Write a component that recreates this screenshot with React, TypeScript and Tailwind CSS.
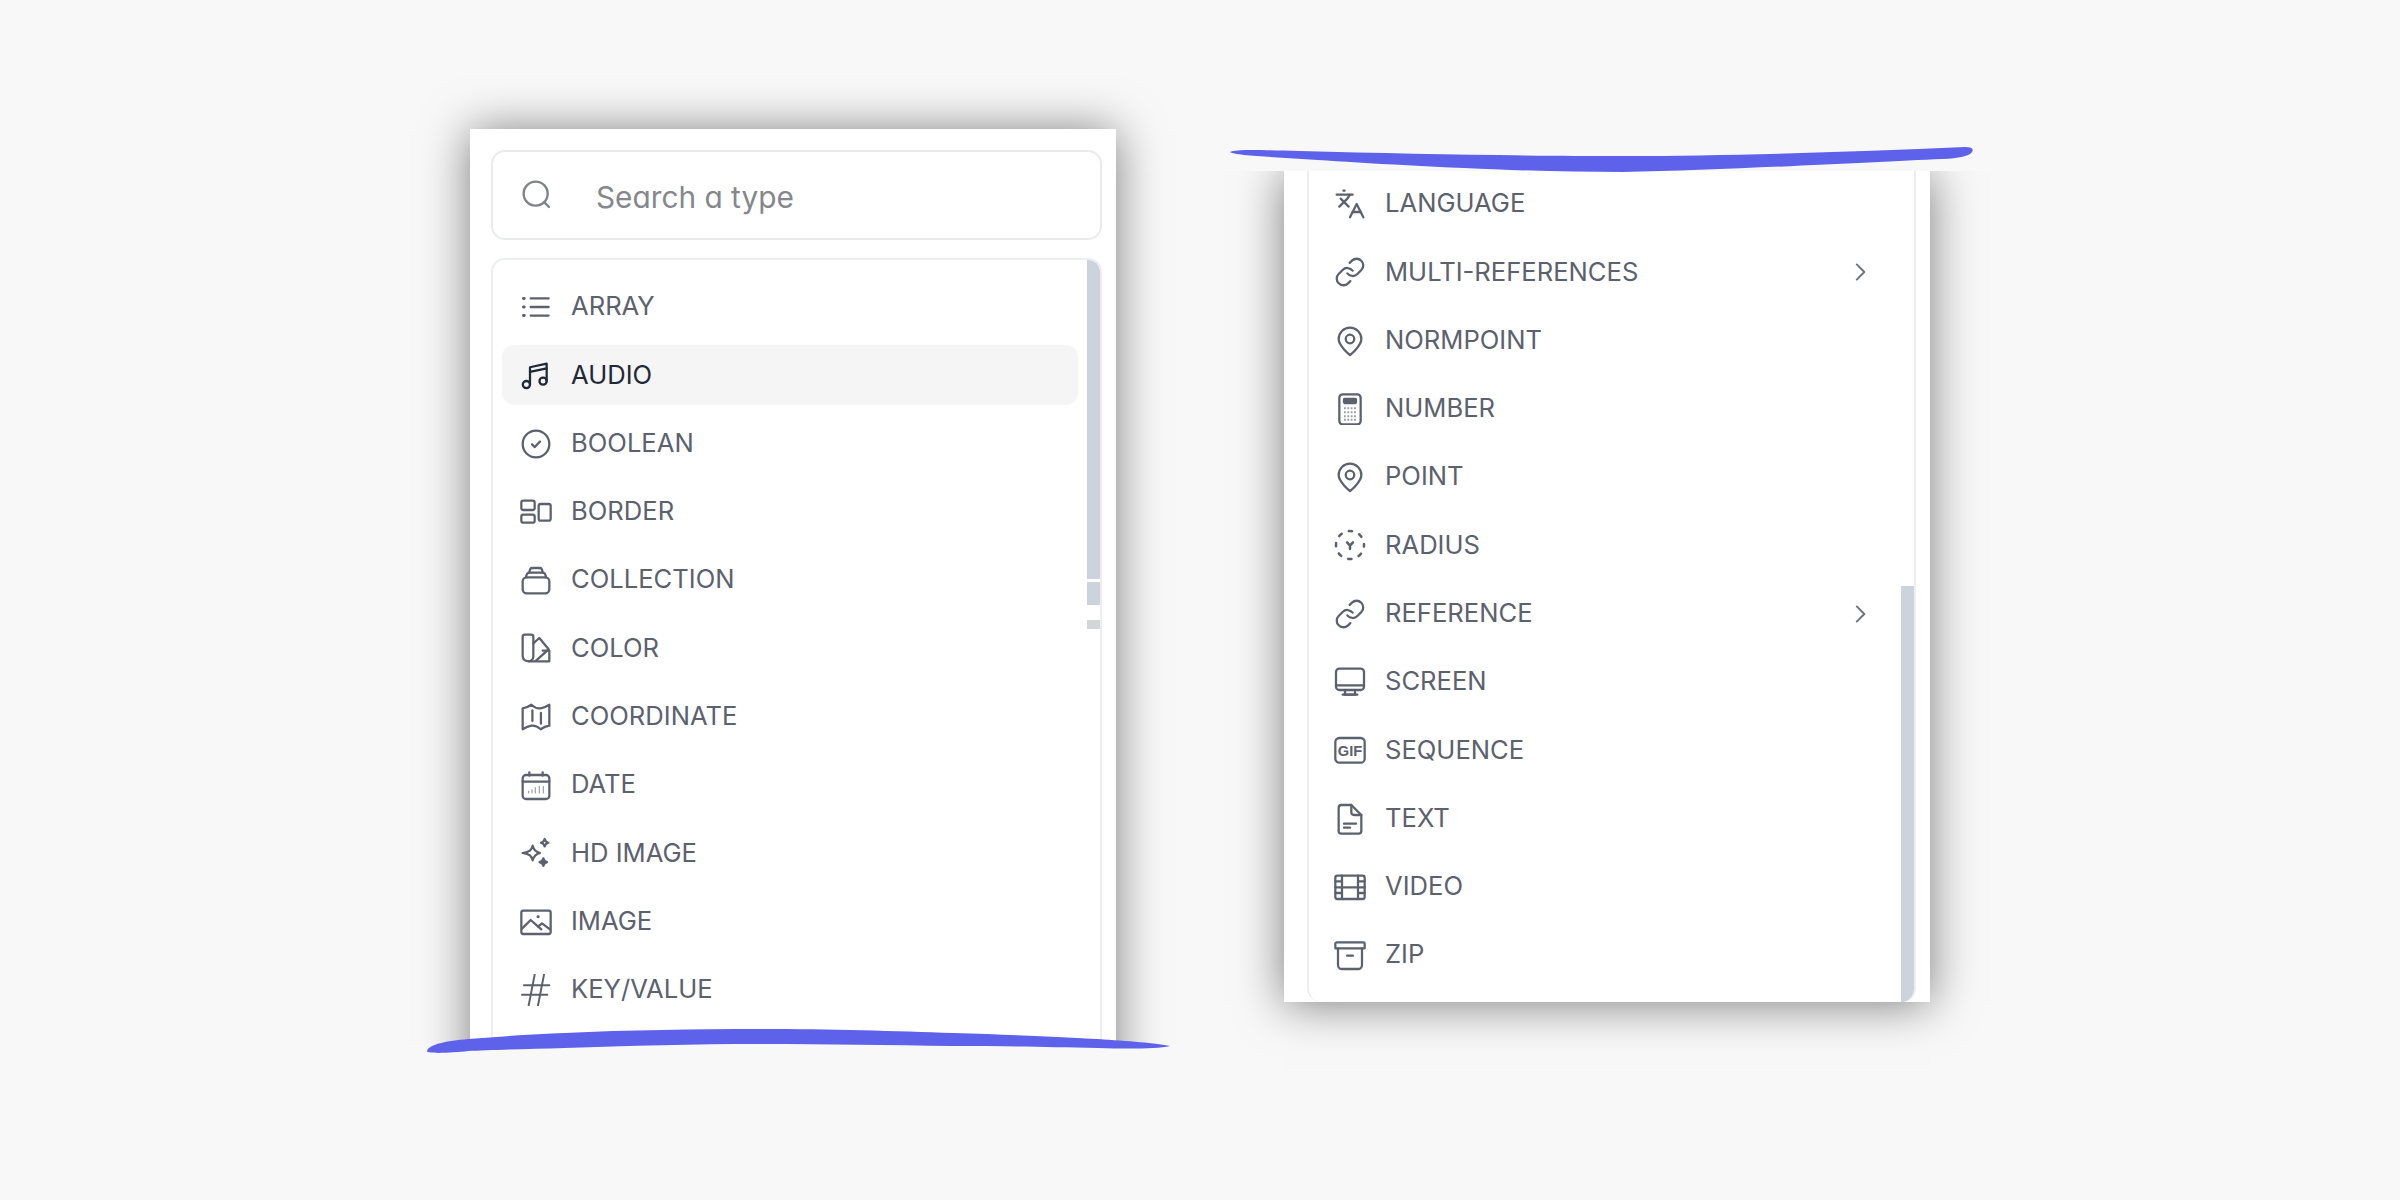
import type { ReactNode } from 'react';

const svgProps = {
  viewBox: '0 0 24 24',
  fill: 'none',
  stroke: 'currentColor',
  strokeWidth: 1.7,
  strokeLinecap: 'round' as const,
  strokeLinejoin: 'round' as const,
  className: 'w-[32px] h-[32px] shrink-0',
};

const Link = (
  <svg {...svgProps}>
    <path d="M10 13a5 5 0 0 0 7.540.540l3-3a5 5 0 0 0-7.070-7.070l-1.720 1.710" />
    <path d="M14 11a5 5 0 0 0-7.540-.540l-3 3a5 5 0 0 0 7.070 7.070l1.710-1.710" />
  </svg>
);

const Pin = (
  <svg {...svgProps}>
    <path d="M12 22.500S3.500 15.800 3.500 10.500a8.500 8.500 0 0 1 17 0c0 5.300-8.500 12-8.500 12Z" />
    <circle cx="12" cy="10.500" r="3.200" />
  </svg>
);

const icons: Record<string, ReactNode> = {
  array: (
    <svg {...svgProps}>
      <path d="M8 5.600h13.500M8 12h13.500M8 18.400h13.500" />
      <path d="M2.600 5.600h.6M2.600 12h.6M2.600 18.400h.6" strokeWidth={2.200} />
    </svg>
  ),
  audio: (
    <svg {...svgProps}>
      <path d="M7.500 19V6.200L20 3.500V16.500" />
      <path d="M7.500 9.600 20 7" />
      <circle cx="4.800" cy="19.200" r="2.700" />
      <circle cx="17.300" cy="16.600" r="2.700" />
    </svg>
  ),
  boolean: (
    <svg {...svgProps}>
      <circle cx="12" cy="12" r="10" />
      <path d="m9 12.300 2.100 2 3.900-4.200" />
    </svg>
  ),
  border: (
    <svg {...svgProps}>
      <rect x="1" y="3.500" width="10" height="7" rx="1.500" />
      <rect x="1" y="14" width="10" height="6" rx="1.500" />
      <rect x="14" y="6" width="9" height="12.500" rx="1.500" />
    </svg>
  ),
  collection: (
    <svg {...svgProps}>
      <rect x="2" y="10" width="20" height="12" rx="3" />
      <path d="M4.500 10c.3-2.500 1.200-3.500 2.500-3.500h10c1.300 0 2.200 1 2.500 3.500" />
      <path d="M7 6.500C7.300 4 8 3 9 3h6c1 0 1.700 1 2 3.500" />
    </svg>
  ),
  color: (
    <svg {...svgProps}>
      <path d="M2 3.500A1.500 1.500 0 0 1 3.500 2h5A1.500 1.500 0 0 1 10 3.500V18.500a3.500 3.500 0 0 1-4 3.400A3.800 3.800 0 0 1 2 18Z" />
      <path d="m10 8.500 4.500-4 7 8.500-9.500 8.500" />
      <path d="M7 22h15v-8h-5" />
    </svg>
  ),
  coordinate: (
    <svg {...svgProps}>
      <path d="M2 5.500Q5.500 5 8.500 2.800 12 6 15.500 5.500 18.500 5 22 2.800V18.500Q18.500 19 15.500 21.200 12 18 8.500 18.500 5.500 19 2 21.200Z" />
      <path d="M9.300 7v8M15.700 9v8" />
    </svg>
  ),
  date: (
    <svg {...svgProps}>
      <rect x="2" y="4.500" width="20" height="18" rx="2.500" />
      <path d="M2 9.500h20M7 2.500v2.500M17 2.500v2.500" />
      <path d="M6.500 18v-1.500M9 18v-2.500M11.500 18v-4M14.500 18v-5M17.500 18v-5" strokeWidth={0.9} opacity={0.6} />
    </svg>
  ),
  hd: (
    <svg {...svgProps}>
      <path d="M9.500 6.500c.8 3.300 2.200 4.700 5.500 5.500-3.300.8-4.700 2.200-5.500 5.500C8.700 14.200 7.300 12.800 2 12c5.300-.8 6.700-2.200 7.500-5.500Z" />
      <path d="M18.500 1.500c.4 1.700 1.100 2.400 2.800 2.800-1.700.4-2.400 1.100-2.800 2.800-.4-1.700-1.100-2.400-2.800-2.800 1.700-.4 2.400-1.100 2.800-2.800Z" />
      <path d="M17.500 16c.4 1.700 1.100 2.400 2.800 2.800-1.700.4-2.400 1.100-2.800 2.800-.4-1.700-1.100-2.400-2.800-2.800 1.700-.4 2.400-1.100 2.800-2.800Z" fill="currentColor" />
    </svg>
  ),
  image: (
    <svg {...svgProps}>
      <rect x="1" y="3.500" width="22" height="17.500" rx="1.500" />
      <path d="m1.500 17 6.500-6.500 8 7" />
      <path d="m13.500 15.500 3-2.500 6 4.500" />
      <path d="M13.500 8h.2" strokeWidth={2.200} />
    </svg>
  ),
  key: (
    <svg {...svgProps} strokeWidth={1.500}>
      <path d="M3 8.500h19M1.500 15.500h19M11 .5 6.500 23.500M18 .5 13.500 23.500" />
    </svg>
  ),
  language: (
    <svg {...svgProps}>
      <path d="m5 8 6 6" />
      <path d="m4 14 6-6 2-3" />
      <path d="M2 5h12" />
      <path d="M7 2h1" />
      <path d="m22 22-5-10-5 10" />
      <path d="M14 18h6" />
    </svg>
  ),
  link: Link,
  pin: Pin,
  number: (
    <svg {...svgProps}>
      <rect x="4" y="1" width="16" height="22.500" rx="2.500" />
      <rect x="7.500" y="4.500" width="9" height="3" rx="0.500" fill="currentColor" />
      <path d="M7.500 11.500h9M7.500 14.500h9M7.500 17.500h9M7.500 20h9" strokeWidth={1.500} strokeDasharray="1.400 1.100" opacity={0.6} strokeLinecap="butt" />
    </svg>
  ),
  radius: (
    <svg {...svgProps} strokeWidth={1.900}>
      <circle cx="12" cy="12" r="10.500" strokeDasharray="2.500 5.750" strokeDashoffset="1.250" />
      <path d="m9.800 10 2.200 2.500L14.200 10M12 12.500V15" />
    </svg>
  ),
  screen: (
    <svg {...svgProps}>
      <rect x="1.500" y="2" width="21" height="16" rx="2.500" />
      <path d="M1.500 14.500h21" />
      <path d="M8.500 18 8 21.500h8L15.500 18" />
      <path d="M6.500 21.500h11" />
    </svg>
  ),
  gif: (
    <svg {...svgProps}>
      <rect x="1" y="3" width="22" height="18.500" rx="3" />
      <text x="12" y="16.200" textAnchor="middle" fontFamily="'Liberation Sans', sans-serif" fontWeight="700" fontSize="11" fill="currentColor" stroke="none">GIF</text>
    </svg>
  ),
  text: (
    <svg {...svgProps}>
      <path d="M3.500 3.500A2 2 0 0 1 5.500 1.500H13L20.500 9V21a2 2 0 0 1-2 2h-13a2 2 0 0 1-2-2Z" />
      <path d="M13 1.500V7a2 2 0 0 0 2 2h5.500" />
      <path d="M7.500 15.500h9M7.500 18.500h4.500" />
    </svg>
  ),
  video: (
    <svg {...svgProps}>
      <rect x="1" y="3.500" width="22" height="17.500" rx="1.500" />
      <path d="M6 3.500V21M18 3.500V21M1 12.200h22M1 7.800h5M1 16.500h5M18 7.800h5M18 16.500h5" />
    </svg>
  ),
  zip: (
    <svg {...svgProps}>
      <path d="M1 3.500a1 1 0 0 1 1-1h20a1 1 0 0 1 1 1V7H1Z" />
      <path d="M3 7v12.500a3 3 0 0 0 3 3h12a3 3 0 0 0 3-3V7" />
      <path d="M9.800 12.500h4.400" />
    </svg>
  ),
};

function Row({ icon, label, active, more }: { icon: string; label: string; active?: boolean; more?: boolean }) {
  return (
    <div
      className={`flex items-center gap-[19px] h-[60px] pl-[18px] pr-[19px] rounded-[12px] text-[25.6px] leading-none ${
        active ? 'bg-[#f5f5f5] text-[#1f2937]' : 'text-[#5b616d]'
      }`}
    >
      {icons[icon]}
      <span className="flex-1 pb-[2px]">{label}</span>
      {more && (
        <svg viewBox="0 0 24 24" fill="none" stroke="#6b7280" strokeWidth={1.800} strokeLinecap="round" strokeLinejoin="round" className="w-[26px] h-[26px]">
          <path d="m9 5 7 7-7 7" />
        </svg>
      )}
    </div>
  );
}

const LEFT = [
  { icon: 'array', label: 'ARRAY' },
  { icon: 'audio', label: 'AUDIO', active: true },
  { icon: 'boolean', label: 'BOOLEAN' },
  { icon: 'border', label: 'BORDER' },
  { icon: 'collection', label: 'COLLECTION' },
  { icon: 'color', label: 'COLOR' },
  { icon: 'coordinate', label: 'COORDINATE' },
  { icon: 'date', label: 'DATE' },
  { icon: 'hd', label: 'HD IMAGE' },
  { icon: 'image', label: 'IMAGE' },
  { icon: 'key', label: 'KEY/VALUE' },
];

const RIGHT = [
  { icon: 'language', label: 'LANGUAGE' },
  { icon: 'link', label: 'MULTI-REFERENCES', more: true },
  { icon: 'pin', label: 'NORMPOINT' },
  { icon: 'number', label: 'NUMBER' },
  { icon: 'pin', label: 'POINT' },
  { icon: 'radius', label: 'RADIUS' },
  { icon: 'link', label: 'REFERENCE', more: true },
  { icon: 'screen', label: 'SCREEN' },
  { icon: 'gif', label: 'SEQUENCE' },
  { icon: 'text', label: 'TEXT' },
  { icon: 'video', label: 'VIDEO' },
  { icon: 'zip', label: 'ZIP' },
];

export default function App() {
  return (
    <div className="w-[2400px] h-[1200px] bg-[#f8f8f8] flex items-start gap-[48px] pl-[410px] font-['Inter',sans-serif] overflow-hidden">
      {/* Left panel, cut off at the bottom by the stroke */}
      <div className="relative w-[766px] mt-[75px]">
        <div className="h-[969px] overflow-hidden px-[60px] pt-[54px]">
          <div className="h-[1000px] bg-white shadow-[0_2px_44px_rgba(0,0,0,0.5)] flex flex-col pl-[21px] pr-[14px] pt-[21px]">
            <div className="h-[90px] shrink-0 flex items-center gap-[43px] pl-[28px] border-2 border-[#e9ebee] rounded-[14px]">
              <svg viewBox="0 0 24 24" fill="none" stroke="#808388" strokeWidth={1.800} strokeLinecap="round" className="w-[32px] h-[32px]">
                <circle cx="11" cy="11" r="9" />
                <path d="m21 21-3.600-3.600" />
              </svg>
              <span className="text-[29.8px] leading-none pt-[6px] text-[#85878c] [font-feature-settings:'cv11']">Search a type</span>
            </div>
            <div className="flex-1 mt-[18px] flex border-2 border-[#eceef1] rounded-t-[14px] overflow-hidden">
              <div className="flex-1 flex flex-col gap-[8.3px] pl-[9px] pr-[9px] pt-[17px]">
                {LEFT.map((r) => (
                  <Row key={r.label} {...r} />
                ))}
              </div>
              <div className="w-[13px] flex flex-col">
                <div className="h-[319px] bg-[#cdd3dc]" />
                <div className="h-[23px] mt-[3px] bg-[#cdd3dc]" />
                <div className="h-[9px] mt-[15px] bg-[#d2d5da]" />
              </div>
            </div>
          </div>
        </div>
        <svg viewBox="0 0 743 25" className="absolute left-[17px] top-[954px] w-[743px] h-[25px]">
          <path fill="#5e62ea" d="M0 22C2 15 20 12 41 10C80 7 110 5 138 4C200 1 270 0 332 0C400 0 470 2 526 4C590 6 640 8 671 10C700 12 730 14 743 17C730 20 700 20 671 19C620 18 580 17 526 17C460 16 400 15 332 15C270 15 200 17 138 19C100 20 60 21 41 22C25 24-2 25 0 22Z" />
        </svg>
      </div>

      {/* Right panel, cut off at the top by the stroke */}
      <div className="relative w-[766px] mt-[171px]">
        <div className="h-[900px] overflow-hidden px-[60px]">
          <div className="h-[831px] bg-white shadow-[0_2px_44px_rgba(0,0,0,0.5)] pl-[23px] pr-[14px] flex flex-col">
            <div className="flex-1 flex border-x-2 border-[#eceef1] rounded-bl-[14px] rounded-br-[14px] overflow-hidden">
              <div className="flex-1 flex flex-col gap-[8.3px] pl-[7px] pr-[9px] pt-[3px]">
                {RIGHT.map((r) => (
                  <Row key={r.label} {...r} />
                ))}
              </div>
              <div className="w-[13px] flex flex-col">
                <div className="h-[415px] shrink-0" />
                <div className="flex-1 bg-[#cdd3dc]" />
              </div>
            </div>
          </div>
        </div>
        <svg viewBox="0 0 743 25" className="absolute left-[6px] -top-[24px] w-[743px] h-[25px]">
          <path fill="#5e62ea" d="M0 5C6 2 30 3 70 4C180 7 300 9 393 9C500 9 620 5 735 0Q745 0 742 5Q738 11 712 12C640 15 500 23 393 25C280 25 150 17 88 13C50 10 5 9 0 5Z" />
        </svg>
      </div>
    </div>
  );
}
